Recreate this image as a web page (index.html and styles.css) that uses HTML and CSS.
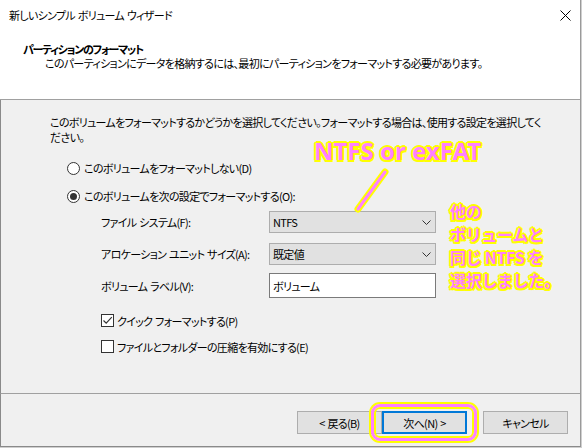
FILE: index.html
```html
<!DOCTYPE html>
<html lang="ja">
<head>
<meta charset="utf-8">
<title>新しいシンプル ボリューム ウィザード</title>
<link rel="stylesheet" href="styles.css">
</head>
<body>
<div class="window">
  <div class="header">
    <div class="titlebar">
      <span class="title">新しいシンプル ボリューム ウィザード</span>
      <svg class="close" width="11" height="11" viewBox="0 0 11 11"><path d="M0.5 0.5 L10.5 10.5 M10.5 0.5 L0.5 10.5" stroke="#000" stroke-width="1" fill="none"/></svg>
    </div>
    <div class="head-title">パーティションのフォーマット</div>
    <div class="head-sub">このパーティションにデータを格納するには、最初にパーティションをフォーマットする必要があります。</div>
  </div>

  <div class="main">
    <p class="intro">このボリュームをフォーマットするかどうかを選択してください。フォーマットする場合は、使用する設定を選択してください。</p>

    <div class="radio-row first"><span class="radio"></span><span>このボリュームをフォーマットしない(D)</span></div>
    <div class="radio-row second"><span class="radio on"></span><span>このボリュームを次の設定でフォーマットする(O):</span></div>

    <div class="form">
      <span class="lbl sel">ファイル システム(F):</span>
      <div class="select"><span>NTFS</span><svg width="9" height="5" viewBox="0 0 9 5"><polyline points="0.5,0.5 4.5,4.5 8.5,0.5" fill="none" stroke="#333" stroke-width="1"/></svg></div>
      <span class="lbl sel">アロケーション ユニット サイズ(A):</span>
      <div class="select"><span>既定値</span><svg width="9" height="5" viewBox="0 0 9 5"><polyline points="0.5,0.5 4.5,4.5 8.5,0.5" fill="none" stroke="#333" stroke-width="1"/></svg></div>
      <span class="lbl txt">ボリューム ラベル(V):</span>
      <div class="textbox">ボリューム</div>
    </div>

    <div class="check-row first"><span class="check"><svg width="11" height="11" viewBox="0 0 11 11"><path d="M1.5 5.5 L4.2 8.2 L9.8 2.2" fill="none" stroke="#333" stroke-width="1.2"/></svg></span><span>クイック フォーマットする(P)</span></div>
    <div class="check-row second"><span class="check"></span><span>ファイルとフォルダーの圧縮を有効にする(E)</span></div>
  </div>

  <div class="footer">
    <div class="btn">&lt; 戻る(B)</div>
    <div class="btn default">次へ(N) &gt;</div>
    <div class="btn cancel">キャンセル</div>
  </div>

  <div class="anno-main">NTFS or exFAT</div>
  <svg class="anno-line" width="45" height="52" viewBox="0 0 45 52">
    <line x1="35" y1="7" x2="8" y2="44" stroke="#ffff00" stroke-width="7" stroke-linecap="round"/>
    <line x1="35" y1="7" x2="8" y2="44" stroke="#ff80ff" stroke-width="3" stroke-linecap="round"/>
  </svg>
  <div class="anno-side">他の<br>ボリュームと<br>同じ NTFS を<br>選択しました。</div>
  <div class="highlight"></div>
</div>
</body>
</html>
```

FILE: styles.css
```css
* {
  box-sizing: border-box;
  margin: 0;
  padding: 0;
}

html {
  background: #cfcfcf;
}

body {
  margin: 0;
  width: 582px;
  height: 448px;
  font-family: "Noto Sans CJK JP", "Noto Sans", sans-serif;
  font-size: 11px;
  letter-spacing: -0.68px;
  word-spacing: 1px;
  color: #000;
  font-feature-settings: "palt";
}

.window {
  position: relative;
  width: 581px;
  height: 447px;
  background: #f0f0f0;
  border-right: 1px solid #9a9a9a;
  border-bottom: 1px solid #8a8a8a;
  display: flex;
  flex-direction: column;
}

.header {
  height: 100px;
  flex: none;
  background: #fff;
  border-bottom: 1px solid #a0a0a0;
}

.titlebar {
  height: 30px;
  display: flex;
  align-items: center;
  justify-content: space-between;
  padding-left: 9px;
  padding-right: 9px;
}

.title {
  line-height: 16px;
}

.head-title {
  margin-top: 12px;
  padding-left: 23px;
  font-weight: bold;
  letter-spacing: -1.3px;
  line-height: 14px;
}

.head-sub {
  padding-left: 45px;
  line-height: 14px;
}

.main {
  flex: 1;
  border-left: 1px solid #8a8a8a;
  padding-left: 49px;
}

.intro {
  margin-top: 15px;
  width: 493px;
  line-height: 15px;
}

.radio-row {
  display: flex;
  align-items: center;
  gap: 4px;
  height: 16px;
  margin-left: 17px;
}

.radio-row.first {
  margin-top: 15px;
}

.radio-row.second {
  margin-top: 12px;
}

.radio {
  width: 13px;
  height: 13px;
  border-radius: 50%;
  border: 1px solid #333;
  background: #fff;
  display: grid;
  place-items: center;
}

.radio.on::after {
  content: "";
  width: 7px;
  height: 7px;
  border-radius: 50%;
  background: #333;
}

.form {
  margin-top: 7px;
  margin-left: 51px;
  display: grid;
  grid-template-columns: 168px 167px;
  grid-template-rows: 32px 30px 25px;
  align-items: start;
}

.lbl {
  display: flex;
  align-items: center;
  white-space: nowrap;
}

.lbl.sel {
  height: 22px;
}

.lbl.txt {
  height: 25px;
}

.select {
  height: 22px;
  background: #e1e1e1;
  border: 1px solid #adadad;
  display: flex;
  align-items: center;
  justify-content: space-between;
  padding-left: 3px;
  padding-right: 4px;
}

.textbox {
  height: 25px;
  background: #fff;
  border: 1px solid #7a7a7a;
  display: flex;
  align-items: center;
  padding-left: 3px;
}

.check-row {
  display: flex;
  align-items: center;
  gap: 3px;
  height: 13px;
  margin-left: 51px;
}

.check-row.first {
  margin-top: 16px;
}

.check-row.second {
  margin-top: 13px;
}

.check {
  width: 13px;
  height: 13px;
  border: 1px solid #333;
  background: #fff;
  display: block;
}

.check svg {
  display: block;
}

.footer {
  flex: none;
  height: 53px;
  border-top: 1px solid #a0a0a0;
  border-left: 1px solid #8a8a8a;
  display: flex;
  justify-content: flex-end;
  align-items: flex-start;
  padding-top: 17px;
  padding-right: 12px;
}

.btn {
  width: 85px;
  height: 23px;
  background: #e1e1e1;
  border: 1px solid #adadad;
  display: flex;
  align-items: center;
  justify-content: center;
}

.btn.default {
  border: 2px solid #0078d7;
}

.btn.cancel {
  margin-left: 16px;
}

.anno-main {
  position: absolute;
  left: 314px;
  top: 139px;
  font-family: "Noto Sans", "Noto Sans CJK JP", sans-serif;
  font-weight: bold;
  font-size: 24px;
  letter-spacing: 0;
  word-spacing: 0;
  line-height: 24px;
  color: #ff80ff;
  white-space: nowrap;
  text-shadow: 2px 0 #ffff00, -2px 0 #ffff00, 0 2px #ffff00, 0 -2px #ffff00,
    1.5px 1.5px #ffff00, -1.5px 1.5px #ffff00, 1.5px -1.5px #ffff00, -1.5px -1.5px #ffff00;
}

.anno-line {
  position: absolute;
  left: 350px;
  top: 165px;
}

.anno-side {
  position: absolute;
  left: 450px;
  top: 200px;
  font-weight: bold;
  font-size: 16px;
  letter-spacing: -0.3px;
  word-spacing: 0;
  font-feature-settings: normal;
  line-height: 23px;
  color: #ff80ff;
  white-space: nowrap;
  text-shadow: 2px 0 #ffff00, -2px 0 #ffff00, 0 2px #ffff00, 0 -2px #ffff00,
    1.5px 1.5px #ffff00, -1.5px 1.5px #ffff00, 1.5px -1.5px #ffff00, -1.5px -1.5px #ffff00;
}

.highlight {
  position: absolute;
  left: 371px;
  top: 404px;
  width: 106px;
  height: 37px;
  border: 3px solid #ff80ff;
  border-radius: 9px;
  box-shadow: 0 0 0 2px #ffff00, inset 0 0 0 2px #ffff00;
}
```
